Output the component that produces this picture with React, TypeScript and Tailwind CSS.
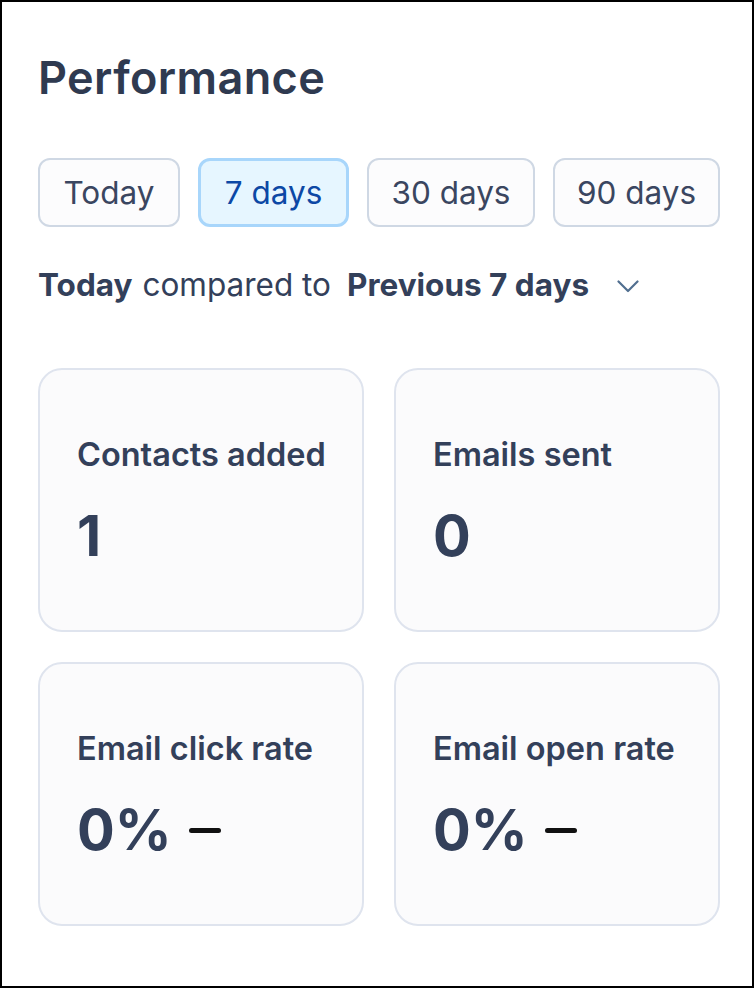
import React from "react";

const font = { fontFamily: "Inter, 'Noto Sans', sans-serif" };

function Chevron() {
  return (
    <svg width="22" height="13" viewBox="0 0 22 13" fill="none" className="ml-[28px] mt-[2px]">
      <path d="M1.5 1.5 L11 11 L20.5 1.5" stroke="#516f90" strokeWidth="2.2" strokeLinecap="round" strokeLinejoin="round" />
    </svg>
  );
}

function Dash() {
  return <span className="ml-[17px] inline-block h-[5px] w-[32px] rounded-full bg-[#111]" />;
}

function Card({ label, value, dash }: { label: string; value: string; dash?: boolean }) {
  return (
    <div className="h-[264px] rounded-[24px] border-2 border-[#dfe4ee] bg-[#fbfbfc] pl-[37px] pt-[65px]">
      <div className="text-[32.5px] font-semibold leading-[40px] text-[#33405a]">{label}</div>
      <div className="mt-[29px] flex items-center text-[56px] font-bold leading-[64px] text-[#33405a]">
        {value}
        {dash && <Dash />}
      </div>
    </div>
  );
}

function Btn({ label, w, active }: { label: string; w: string; active?: boolean }) {
  return (
    <div
      className={
        active
          ? `${w} flex h-[69px] items-center justify-center rounded-[12px] border-[3px] border-[#a8d6fb] bg-[#e6f6ff] text-[31.5px] text-[#0c48a5]`
          : `${w} flex h-[69px] items-center justify-center rounded-[12px] border-2 border-[#cfd8e4] bg-[#fcfcfd] text-[31.5px] text-[#3a4660]`
      }
    >
      {label}
    </div>
  );
}

export default function App() {
  return (
    <div style={font} className="h-[988px] w-[754px] border-2 border-black bg-white pl-[36px] pr-[32px] pt-[46px]">
      <h1 className="text-[45px] font-semibold leading-[60px] tracking-[0.4px] text-[#2f3a50]">Performance</h1>
      <div className="mt-[50px] flex justify-between">
        <Btn label="Today" w="w-[142px]" />
        <Btn label="7 days" w="w-[151px]" active />
        <Btn label="30 days" w="w-[168px]" />
        <Btn label="90 days" w="w-[167px]" />
      </div>
      <div className="mt-[38px] flex items-center text-[31.5px] leading-[40px] text-[#33405a]">
        <span className="font-bold">Today</span>
        <span className="ml-[10px]">compared to</span>
        <span className="ml-[16px] font-bold">Previous 7 days</span>
        <Chevron />
      </div>
      <div className="mt-[63px] grid grid-cols-2 gap-[30px]">
        <Card label="Contacts added" value="1" />
        <Card label="Emails sent" value="0" />
        <Card label="Email click rate" value="0%" dash />
        <Card label="Email open rate" value="0%" dash />
      </div>
    </div>
  );
}
